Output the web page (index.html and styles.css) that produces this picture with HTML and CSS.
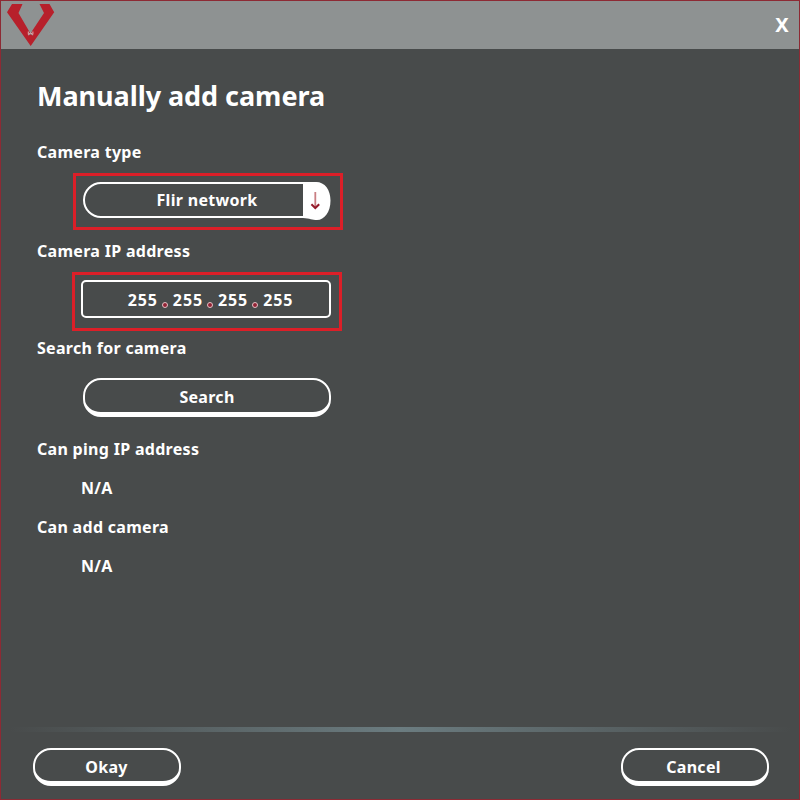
FILE: index.html
```html
<!DOCTYPE html>
<html lang="en">
<head>
<meta charset="utf-8">
<title>Manually add camera</title>
<link rel="stylesheet" href="styles.css">
</head>
<body>
<div class="window">
  <header class="titlebar">
    <svg class="logo" width="48" height="43" viewBox="0 0 48 43" aria-hidden="true">
      <path fill="#b7202b" d="M5 0H15.5L11.5 9L21.7 26.5L23 29L20.8 32L23.6 30.2L26.4 32L24.2 29L25.4 26.5L37 9L32.5 0H42.5L47.2 8.2L23.7 42L0 8.2Z"/>
      <path fill="none" stroke="#d9b3b5" stroke-width="1" d="M21.3 27.5V30.5L23.6 29L25.9 30.5V27.5"/>
    </svg>
    <button class="close" aria-label="Close">X</button>
  </header>
  <main class="content">
    <h1 class="title">Manually add camera</h1>
    <div class="label type-label">Camera type</div>
    <div class="highlight highlight-type">
      <div class="select">
        <span class="select-value">Flir network</span>
        <svg class="select-end" width="30" height="38" viewBox="0 0 30 38" aria-hidden="true">
          <path fill="#fff" d="M1 0H14C23 0 28.5 8 28.5 18.5C28.5 30 22.5 38 15 38C10 38 8 36.5 1 36Z"/>
          <path fill="none" stroke="#c97f83" stroke-width="1.8" d="M13.3 10V26"/>
          <path fill="none" stroke="#951b2a" stroke-width="2" d="M9.4 22.3L13.3 26L17.2 22.3"/>
        </svg>
      </div>
    </div>
    <div class="label ip-label">Camera IP address</div>
    <div class="highlight highlight-ip">
      <div class="ip">
        <span>255</span><i class="dot"></i><span>255</span><i class="dot"></i><span>255</span><i class="dot"></i><span>255</span>
      </div>
    </div>
    <div class="label search-label">Search for camera</div>
    <button class="button search">Search</button>
    <div class="label ping-label">Can ping IP address</div>
    <div class="value">N/A</div>
    <div class="label add-label">Can add camera</div>
    <div class="value">N/A</div>
  </main>
  <div class="divider"></div>
  <footer class="footer">
    <button class="button okay">Okay</button>
    <button class="button cancel">Cancel</button>
  </footer>
</div>
</body>
</html>
```
FILE: styles.css
```css
* { box-sizing: border-box; }
body {
  margin: 0;
  font: 700 16px/20px "Noto Sans", "Open Sans", sans-serif;
  letter-spacing: 0.3px;
  color: #fff;
}
button { font: inherit; letter-spacing: inherit; color: inherit; background: none; padding: 0; }
.window {
  width: 800px;
  height: 800px;
  display: flex;
  flex-direction: column;
  background: #484b4b;
  border: 1px solid #8d2a34;
}
.titlebar {
  height: 48px;
  display: flex;
  justify-content: space-between;
  align-items: flex-start;
  padding: 3px 10px 0 6px;
  background: #8e9292;
}
.close { border: 0; font-size: 20px; line-height: 24px; margin-top: 9px; }
.content {
  flex: 1;
  display: flex;
  flex-direction: column;
  align-items: flex-start;
  padding: 29px 36px 0;
}
.title {
  margin: 0 0 28px;
  font-size: 27px;
  line-height: 36px;
  letter-spacing: -0.05px;
}
.label { height: 20px; white-space: nowrap; }
.highlight { border: 3px solid #dc1f28; }
.highlight-type {
  width: 270px;
  height: 57px;
  margin: 11px 0 11px 36px;
  padding: 6px 7px;
}
.select {
  width: 247px;
  height: 36px;
  display: flex;
  border: 2px solid #fff;
  border-radius: 18px;
}
.select-value {
  width: 219px;
  flex: none;
  padding-left: 25px;
  text-align: center;
  line-height: 32px;
}
.select-end { flex: none; margin: -2px 0 0 -2px; }
.highlight-ip {
  width: 270px;
  height: 59px;
  margin: 11px 0 7px 35px;
  padding: 5px 6px;
}
.ip {
  width: 250px;
  height: 38px;
  display: flex;
  align-items: center;
  justify-content: center;
  padding: 1px 0 0 9px;
  border: 2px solid #fff;
  border-radius: 5px;
  letter-spacing: 0.9px;
}
.dot {
  width: 6px;
  height: 6px;
  margin: 11px 5px 0 4px;
  border: 1px solid #e5c0c4;
  border-radius: 50%;
  background: #922335;
}
.button {
  width: 148px;
  height: 38px;
  padding-top: 1px;
  border: 2px solid #fff;
  border-bottom-width: 5px;
  border-radius: 18px;
  text-align: center;
}
.search { width: 248px; height: 39px; margin: 20px 0 22px 46px; }
.okay { padding: 2px 1px 0 0; }
.cancel { padding: 2px 3px 0 0; }
.value { height: 20px; margin: 19px 0 19px 44px; }
.divider {
  height: 5px;
  background: linear-gradient(90deg, #484b4b 1%, #6b7c80 50%, #484b4b 99%);
}
.footer {
  height: 67px;
  display: flex;
  justify-content: space-between;
  padding: 16px 30px 0 32px;
}
```
